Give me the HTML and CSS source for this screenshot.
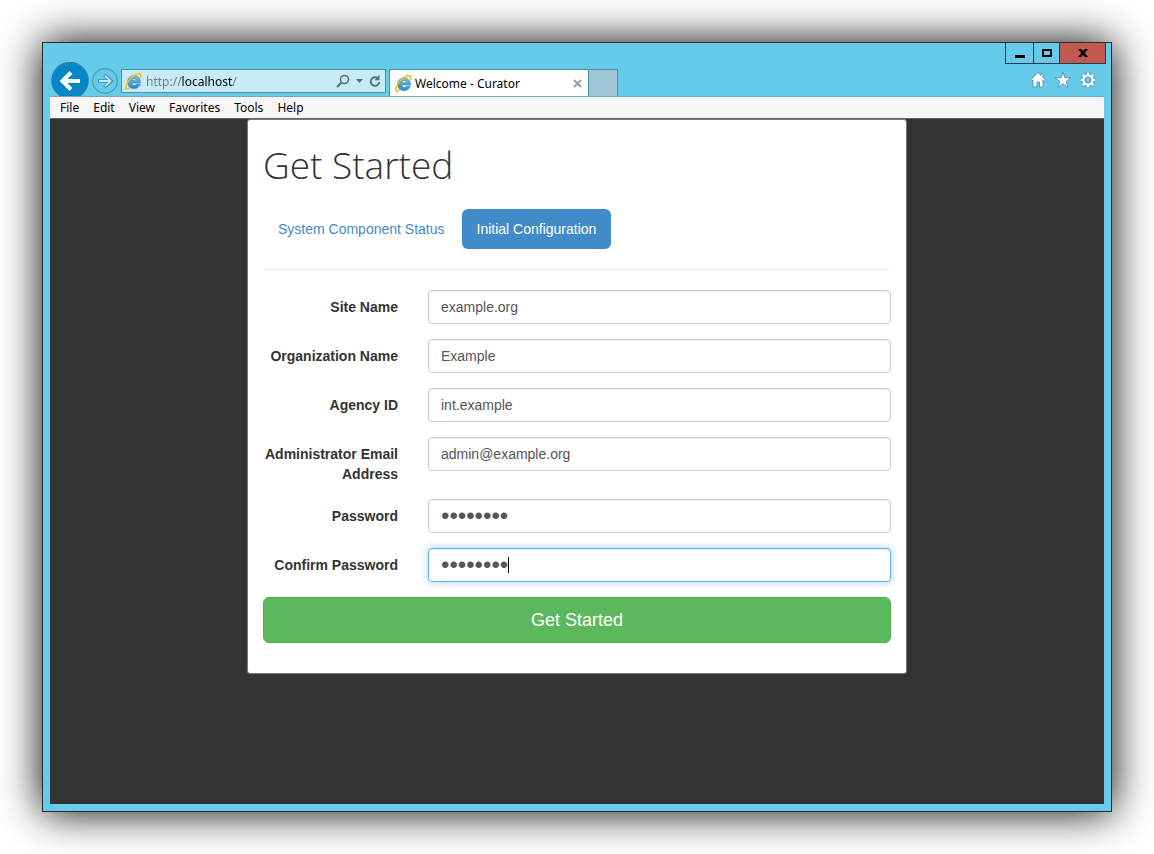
FILE: index.html
```html
<!DOCTYPE html>
<html lang="en">
<head>
<meta charset="utf-8">
<meta name="viewport" content="width=device-width, initial-scale=1">
<title>Welcome - Curator</title>
<link rel="stylesheet" href="styles.css">
</head>
<body>
<svg class="defs" aria-hidden="true">
  <defs>
    <linearGradient id="blue" x1="0" y1="0" x2="0" y2="1">
      <stop offset="0" stop-color="#6fc0ea"/>
      <stop offset="1" stop-color="#2a86c6"/>
    </linearGradient>
    <symbol id="ie" viewBox="0 0 16 16">
      <path d="M14.600 9.500H6.300C6.400 11 7.400 11.800 8.700 11.800c1 0 1.700-.4 2.100-1.100h3.600c-.8 2.500-3.100 4-5.800 4-3.700 0-6.200-2.500-6.200-6s2.500-6.100 6.200-6.100 6.100 2.700 6 6.900zM6.300 7.200h4.500C10.600 5.900 9.800 5.200 8.600 5.200S6.600 5.900 6.300 7.200z" fill="url(#blue)" stroke="#2a78b0" stroke-width=".5"/>
      <path d="M4.300 13.700C2 15.600.4 15.500.8 12.900 1.400 9 6 3.200 10.700 1.200c3.600-1.400 5-.1 3.800 3" fill="none" stroke="#f5bd1a" stroke-width="1.400" stroke-linecap="round"/>
    </symbol>
  </defs>
</svg>
<div class="window">
  <div class="caption">
    <button class="caption-btn" aria-label="Minimize"><svg width="12" height="12"><path d="M1 8h10v3H1z"/></svg></button>
    <button class="caption-btn caption-max" aria-label="Maximize"><svg width="12" height="12"><path d="M1 2h10v8H1zM3 4v4h6V4z" fill-rule="evenodd"/></svg></button>
    <button class="caption-btn caption-close" aria-label="Close"><svg width="12" height="12"><path d="M1 2h3l2 2 2-2h3L7.700 6 11 10H8L6 8l-2 2H1l3.300-4z"/></svg></button>
  </div>
  <div class="nav">
    <button class="back" aria-label="Back"><svg width="40" height="34" viewBox="0 0 40 34"><circle cx="20" cy="18.500" r="18.300" fill="#0686c6" stroke="#2f829f"/><path d="M30 19H13M21 10.500 12.500 19l8.500 8.500" fill="none" stroke="#fff" stroke-width="4"/></svg></button>
    <button class="forward" aria-label="Forward"><svg width="26" height="26" viewBox="0 0 26 26"><circle cx="13" cy="13" r="12.300" fill="none" stroke="#4a9ab4" stroke-width="1.200"/><path d="M6 13h13M12.500 7l6.500 6-6.500 6" fill="none" stroke="#4293ae" stroke-width="3.600"/><path d="M7 13h11M13 7.700l5.500 5.300-5.500 5.300" fill="none" stroke="#c3e9f6" stroke-width="1.800"/></svg></button>
    <div class="address">
      <svg width="17" height="17"><use href="#ie"/></svg>
      <input class="url" type="text" aria-label="Address" value="http://localhost/">
      <button class="tool" aria-label="Search"><svg width="14" height="14" viewBox="0 0 14 14" fill="none" stroke="#55747e"><circle cx="8.500" cy="5.500" r="4" stroke-width="1.600"/><path d="M5.700 8.300 1 13" stroke-width="2.200"/></svg></button>
      <button class="tool" aria-label="Address list"><svg width="7" height="4"><path d="M0 0h7L3.500 4z" fill="#55747e"/></svg></button>
      <button class="tool" aria-label="Refresh"><svg width="12" height="14" viewBox="0 0 12 14"><path d="M8 3.700A4.300 4.300 0 1 0 10.300 8" fill="none" stroke="#55747e" stroke-width="1.900"/><path d="M10.500.5v5.800H5.500z" fill="#55747e"/></svg></button>
    </div>
    <div class="tab">
      <svg width="17" height="17"><use href="#ie"/></svg>
      <span class="tab-title">Welcome - Curator</span>
      <button class="tool" aria-label="Close tab"><svg width="9" height="9"><path d="M1 1l7 7M8 1 1 8" stroke="#a0a0a0" stroke-width="2"/></svg></button>
    </div>
    <button class="new-tab" aria-label="New tab"></button>
    <div class="actions">
      <button class="tool" aria-label="Home"><svg width="18" height="18" viewBox="0 0 18 18"><path d="M9 1.500 1.500 9l1 1.200L4 9v7h4v-5h2.500v5H14V9l1.500 1.200 1-1.200L14 6.500V2.500h-2v2z" fill="#fff" stroke="#4f91a9" stroke-width=".9"/></svg></button>
      <button class="tool" aria-label="Favorites"><svg width="18" height="18" viewBox="0 0 18 18"><path d="M9 1l2 5.800h6l-4.800 3.600L14 16.500l-5-3.700-5 3.700 1.800-6.100L1 6.800h6z" fill="#fff" stroke="#4f91a9" stroke-width=".9"/></svg></button>
      <button class="tool" aria-label="Tools"><svg width="18" height="18" viewBox="-9 -9 18 18"><g stroke="#4f91a9" stroke-width="4.200"><path d="M0-8V8M-8 0H8M-5.500-5.500l11 11M5.500-5.500l-11 11"/></g><circle r="6" fill="#4f91a9"/><g stroke="#fff" stroke-width="2.600"><path d="M0-7.500v15M-7.500 0h15M-5.100-5.100 5.100 5.100M5.100-5.100-5.100 5.100"/></g><circle r="5.500" fill="#fff"/><circle r="3.100" fill="#66caea" stroke="#4f91a9"/></svg></button>
    </div>
  </div>
  <nav class="menu" aria-label="Menu bar">
    <button>File</button><button>Edit</button><button>View</button><button>Favorites</button><button>Tools</button><button>Help</button>
  </nav>
  <main class="page">
    <section class="panel">
      <h1>Get Started</h1>
      <div class="pills">
        <a class="pill" href="#status">System Component Status</a>
        <a class="pill pill-active" href="#config" aria-current="page">Initial Configuration</a>
      </div>
      <form class="form">
        <div class="field"><label for="site">Site Name</label><input id="site" type="text" value="example.org"></div>
        <div class="field"><label for="org">Organization Name</label><input id="org" type="text" value="Example"></div>
        <div class="field"><label for="agency">Agency ID</label><input id="agency" type="text" value="int.example"></div>
        <div class="field"><label for="email">Administrator Email Address</label><input id="email" type="text" value="admin@example.org"></div>
        <div class="field"><label for="password">Password</label><input id="password" type="password" value="password"></div>
        <div class="field"><label for="confirm">Confirm Password</label><input id="confirm" class="focused" type="password" value="password"><span class="caret"></span></div>
        <button class="submit" type="button">Get Started</button>
      </form>
    </section>
  </main>
</div>
</body>
</html>
```
FILE: styles.css
```css
* { box-sizing: border-box; }

body {
  margin: 0;
  padding: 42px;
  min-height: 100vh;
  display: flex;
  background: #fff;
  color: #333;
  font: 14px/20px "Liberation Sans", Arial, sans-serif;
}

button {
  margin: 0;
  padding: 0;
  border: 0;
  background: none;
  color: inherit;
  font: inherit;
}

svg { display: block; }
.defs { position: absolute; width: 0; height: 0; }

.window {
  flex: 1;
  min-width: 0;
  display: flex;
  flex-direction: column;
  padding: 0 7px 7px;
  border: 1px solid #2b2b2b;
  background: #66caea;
  box-shadow: 0 0 40px #000;
}

.caption {
  display: flex;
  justify-content: flex-end;
  height: 21px;
  margin-right: -2px;
}
.caption-btn {
  display: flex;
  align-items: center;
  justify-content: center;
  width: 28px;
  border: solid #2b3a40;
  border-width: 0 0 1px 1px;
}
.caption-max { width: 26px; }
.caption-close { width: 47px; border-right-width: 1px; background: #c1594f; }

.nav {
  display: flex;
  align-items: flex-start;
  height: 32px;
}
.back { margin-top: -2px; }
.forward { margin: 4px 3px 0 2px; }

.address {
  display: flex;
  align-items: center;
  gap: 6px;
  width: 265px;
  height: 24px;
  margin: 5px 3px 0 0;
  padding: 0 4px 0 3px;
  border: 1px solid #4a91a8;
  background: #c8ecf7;
}
.url {
  flex: 1;
  min-width: 0;
  margin-left: -2px;
  padding: 2px 0 0;
  border: 0;
  outline: 0;
  background: linear-gradient(to right, #777 35px, #000 35px, #000 87px, #777 87px);
  background-clip: text;
  color: transparent;
  font: 12px/20px "Noto Sans", sans-serif;
}

.tab {
  display: flex;
  align-items: center;
  gap: 3px;
  width: 200px;
  height: 27px;
  margin-top: 5px;
  padding: 0 6px 0 5px;
  border: 1px solid #4a91a8;
  border-bottom: 0;
  background: #fff;
  color: #000;
  font: 12px/20px "Noto Sans", sans-serif;
}
.tab-title { flex: 1; padding-top: 2px; white-space: nowrap; }
.new-tab {
  width: 29px;
  height: 27px;
  margin-top: 5px;
  border: 1px solid #4a91a8;
  border-width: 1px 1px 0 0;
  background: #9fc6d6;
}
.actions {
  display: flex;
  gap: 7px;
  margin: 7px 7px 0 auto;
}

.menu {
  display: flex;
  gap: 14px;
  height: 23px;
  padding: 0 10px;
  border-top: 1px solid #7ba5bd;
  border-bottom: 1px solid #666;
  background: #f6f6f6;
  color: #000;
  font: 12px/20px "Noto Sans", sans-serif;
}

.page {
  flex: 1;
  background: #333;
}
.panel {
  max-width: 660px;
  margin: 0 auto;
  padding: 20px 15px 30px;
  border: 1px solid #777;
  border-radius: 3px;
  background: #fff;
}
h1 {
  margin: 0 0 19px;
  font: 300 37px/50px "Open Sans", sans-serif;
}
.pills {
  display: flex;
  flex-wrap: wrap;
  gap: 2px;
  padding-bottom: 20px;
  border-bottom: 1px solid #eee;
}
.pill {
  padding: 10px 15px;
  border-radius: 6px;
  color: #428bca;
  text-decoration: none;
}
.pill-active { background: #428bca; color: #fff; }

.form {
  display: flex;
  flex-direction: column;
  gap: 15px;
  padding-top: 20px;
}
.field {
  position: relative;
  display: grid;
  grid-template-columns: minmax(0, 135fr) minmax(0, 463fr);
  gap: 30px;
  align-items: start;
}
.field label {
  padding-top: 7px;
  font-weight: bold;
  text-align: right;
}
.field input {
  width: 100%;
  height: 34px;
  padding: 6px 12px;
  border: 1px solid #ccc;
  border-radius: 4px;
  outline: 0;
  background: #fff;
  box-shadow: inset 0 1px 1px rgba(0, 0, 0, .08);
  color: #555;
  font: inherit;
}
.field input[type="password"] {
  padding: 0 12px;
  font-size: 24px;
}
.field .focused {
  border-color: #66afe9;
  box-shadow: inset 0 1px 1px rgba(0, 0, 0, .08), 0 0 8px rgba(102, 175, 233, .6);
}
.caret {
  position: absolute;
  left: 245px;
  top: 9px;
  width: 1px;
  height: 16px;
  background: #000;
}
.submit {
  height: 46px;
  border: 1px solid #4cae4c;
  border-radius: 6px;
  background: #5cb85c;
  color: #fff;
  font-size: 18px;
}
```
